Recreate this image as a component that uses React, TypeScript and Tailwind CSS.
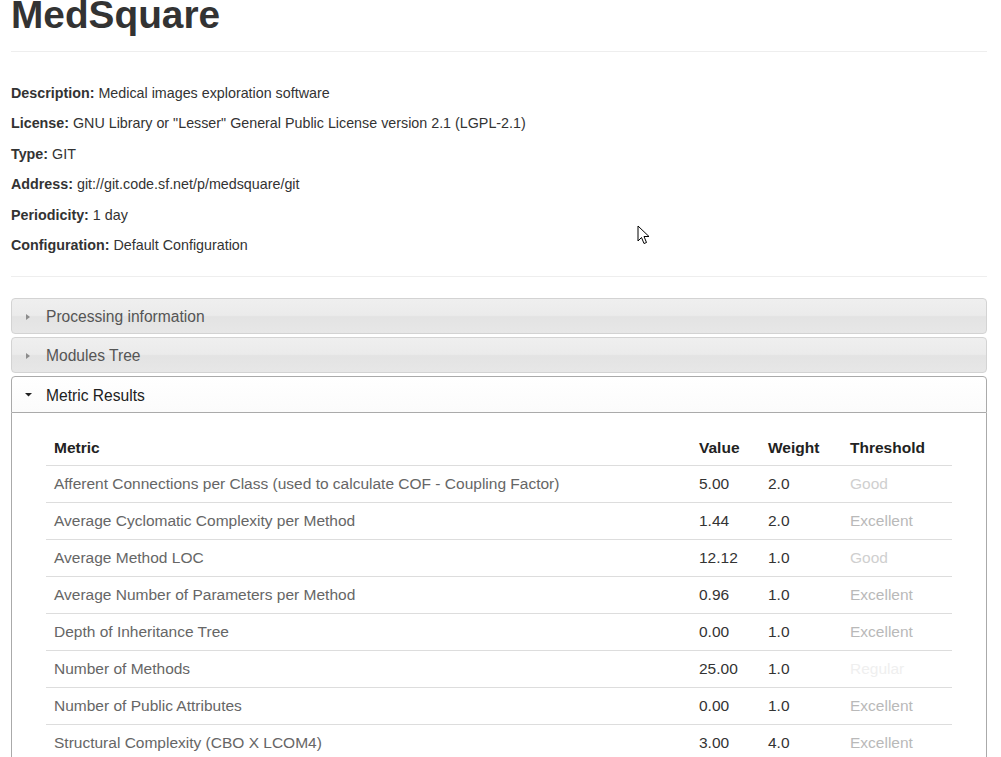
import React from "react";

const rows: [string, string, string, string, string][] = [
  ["Afferent Connections per Class (used to calculate COF - Coupling Factor)", "5.00", "2.0", "Good", "text-[#cfcfcf]"],
  ["Average Cyclomatic Complexity per Method", "1.44", "2.0", "Excellent", "text-[#b9b9b9]"],
  ["Average Method LOC", "12.12", "1.0", "Good", "text-[#cfcfcf]"],
  ["Average Number of Parameters per Method", "0.96", "1.0", "Excellent", "text-[#b9b9b9]"],
  ["Depth of Inheritance Tree", "0.00", "1.0", "Excellent", "text-[#b9b9b9]"],
  ["Number of Methods", "25.00", "1.0", "Regular", "text-[#efefef]"],
  ["Number of Public Attributes", "0.00", "1.0", "Excellent", "text-[#b9b9b9]"],
  ["Structural Complexity (CBO X LCOM4)", "3.00", "4.0", "Excellent", "text-[#b9b9b9]"],
];

const info: [string, string][] = [
  ["Description:", "Medical images exploration software"],
  ["License:", 'GNU Library or "Lesser" General Public License version 2.1 (LGPL-2.1)'],
  ["Type:", "GIT"],
  ["Address:", "git://git.code.sf.net/p/medsquare/git"],
  ["Periodicity:", "1 day"],
  ["Configuration:", "Default Configuration"],
];

function ClosedHeader({ label }: { label: string }) {
  return (
    <div className="flex items-center h-[36px] pt-[2px] border border-[#d3d3d3] rounded-[4px] bg-[linear-gradient(to_bottom,#efefef_0%,#ebebeb_48%,#e3e3e3_52%,#e7e7e7_100%)] text-[15.6px] text-[#555555]">
      <svg width="34" height="10" viewBox="0 0 34 10" className="shrink-0">
        <path d="M14 2 L18 5 L14 8 Z" fill="#8c8c8c" />
      </svg>
      <span>{label}</span>
    </div>
  );
}

export default function App() {
  return (
    <div className="relative w-[1001px] h-[757px] overflow-hidden bg-white font-['Liberation_Sans',Arial,sans-serif] text-[#333333]">
      <div className="mx-[11px] w-[976px]">
        <div className="mt-[-5px] h-[57px] border-b border-[#eeeeee]">
          <h1 className="text-[38.8px] leading-[40px] font-bold text-[#333333]">MedSquare</h1>
        </div>
        <div className="pt-[31px] text-[14.3px]">
          {info.map(([k, v]) => (
            <p key={k} className="leading-[20px] mb-[10.4px]">
              <b className="font-bold">{k}</b> {v}
            </p>
          ))}
        </div>
        <div className="mt-[21px] border-b border-[#eeeeee]" />
        <div className="mt-[21px]">
          <ClosedHeader label="Processing information" />
          <div className="mt-[3px]">
            <ClosedHeader label="Modules Tree" />
          </div>
          <div className="mt-[3px] flex items-center h-[37px] pt-[2px] border border-[#aaaaaa] rounded-t-[4px] bg-[linear-gradient(to_bottom,#ffffff,#fbfbfb)] text-[15.6px] text-[#212121]">
            <svg width="34" height="10" viewBox="0 0 34 10" className="shrink-0">
              <path d="M13 3 L20 3 L16.5 6.5 Z" fill="#222222" />
            </svg>
            <span>Metric Results</span>
          </div>
          <div className="border-x border-[#aaaaaa] bg-white px-[34px] pt-[17px] h-[400px]">
            <table className="w-[906px] table-fixed border-collapse text-[15.5px]">
              <colgroup>
                <col className="w-[645px]" />
                <col className="w-[69px]" />
                <col className="w-[82px]" />
                <col className="w-[110px]" />
              </colgroup>
              <thead>
                <tr className="border-b border-[#dddddd]">
                  <th className="text-left font-bold text-[#222222] px-[8px] h-[36px] leading-[20px]">Metric</th>
                  <th className="text-left font-bold text-[#222222] px-[8px] leading-[20px]">Value</th>
                  <th className="text-left font-bold text-[#222222] px-[8px] leading-[20px]">Weight</th>
                  <th className="text-left font-bold text-[#222222] px-[8px] leading-[20px]">Threshold</th>
                </tr>
              </thead>
              <tbody>
                {rows.map(([m, v, w, t, c]) => (
                  <tr key={m} className="border-b border-[#dddddd]">
                    <td className="px-[8px] h-[37px] leading-[20px] text-[#666666] whitespace-nowrap">{m}</td>
                    <td className="px-[8px] leading-[20px] text-[#333333]">{v}</td>
                    <td className="px-[8px] leading-[20px] text-[#333333]">{w}</td>
                    <td className={"px-[8px] leading-[20px] " + c}>{t}</td>
                  </tr>
                ))}
              </tbody>
            </table>
          </div>
        </div>
      </div>
      <svg className="absolute left-[637px] top-[225px]" width="14" height="21" viewBox="0 0 14 21">
        <path d="M1 1 L1 16 L4.5 12.5 L7 18.5 L9.5 17.5 L7 11.5 L12 11.5 Z" fill="#ffffff" stroke="#000000" strokeWidth="1" strokeLinejoin="round" />
      </svg>
    </div>
  );
}
